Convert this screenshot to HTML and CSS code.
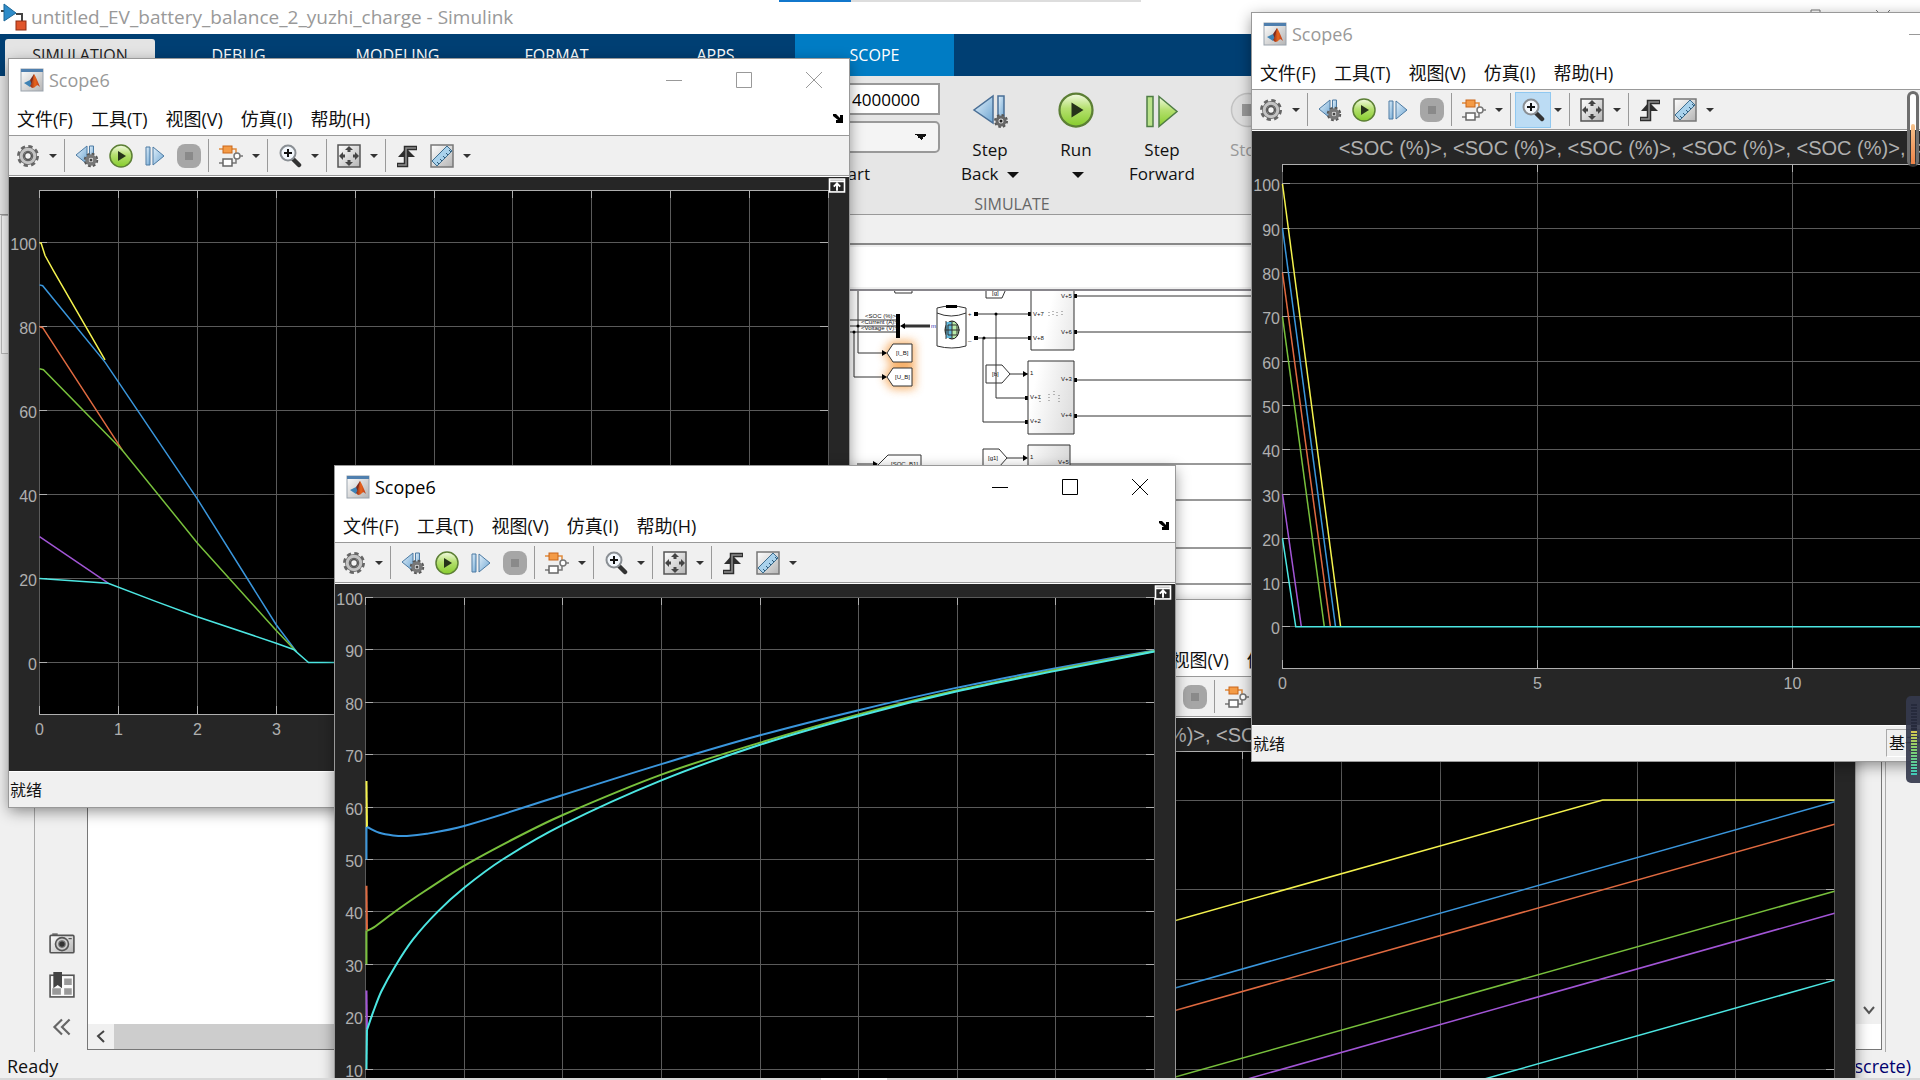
FILE: index.html
```
<!DOCTYPE html>
<html lang="zh-CN">
<head>
    <meta charset="UTF-8">
    <meta name="viewport" content="width=device-width, initial-scale=1.0">
    <title>untitled_EV_battery_balance_2_yuzhi_charge - Simulink</title>
    <link rel="stylesheet" href="styles.css">
</head>
<body>
    <!-- Shared icons -->
    <svg class="sprite" aria-hidden="true">
        <defs>
            <linearGradient id="gBlue" x1="0" y1="0" x2="1" y2="1"><stop offset="0" stop-color="#e3f1fb"/><stop offset="1" stop-color="#6fa6d2"/></linearGradient>
            <linearGradient id="gGreen" x1="0" y1="0" x2="0" y2="1"><stop offset="0" stop-color="#f4fbe4"/><stop offset="0.45" stop-color="#b5e070"/><stop offset="1" stop-color="#86cc2c"/></linearGradient>
            <linearGradient id="gGrey" x1="0" y1="0" x2="1" y2="1"><stop offset="0" stop-color="#ffffff"/><stop offset="1" stop-color="#b4b4b4"/></linearGradient>
            <linearGradient id="gBlock" x1="0" y1="0" x2="1" y2="1"><stop offset="0.3" stop-color="#ffffff"/><stop offset="1" stop-color="#cfcfcf"/></linearGradient>
            <linearGradient id="gFlame" x1="0" y1="0" x2="1" y2="0"><stop offset="0" stop-color="#8a2a1a"/><stop offset="0.5" stop-color="#e8641c"/><stop offset="1" stop-color="#b5371a"/></linearGradient>
        </defs>
        <symbol id="matlab" viewBox="0 0 24 24">
            <rect x="1" y="1" width="22" height="22" fill="url(#gGrey)" stroke="#9aa3ad"/>
            <rect x="1" y="1" width="22" height="3" fill="#4f7fae"/>
            <path d="M4 15l6-3 3 3-3 4z" fill="#3f83b5"/>
            <path d="M10 12l4-6 1 6-3 5z" fill="#7a2b20"/>
            <path d="M14 6c2 3 4 8 6 13-2-2-3-2-4-1-1 1-2 2-4 2l-2-2c2-2 3-8 4-12z" fill="url(#gFlame)"/>
        </symbol>
        <symbol id="gear" viewBox="0 0 24 24">
            <circle cx="12" cy="12" r="9" fill="none" stroke="#666" stroke-width="4" stroke-dasharray="4 3.07"/>
            <circle cx="12" cy="12" r="6.5" fill="#e6e6e6" stroke="#666" stroke-width="5"/>
            <circle cx="12" cy="12" r="6.8" fill="none" stroke="#c4c4c4" stroke-width="3"/>
            <circle cx="12" cy="12" r="3.4" fill="#f4f4f4" stroke="#555" stroke-width="1.5"/>
        </symbol>
        <symbol id="step-back" viewBox="0 0 24 24">
            <path d="M12 2v18L1 11z" fill="url(#gBlue)" stroke="#4d7ba3"/>
            <path d="M14.500 2h4v16h-4z" fill="url(#gBlue)" stroke="#4d7ba3"/>
            <circle cx="16" cy="16" r="6" fill="none" stroke="#555" stroke-width="2.500" stroke-dasharray="2.7 2"/>
            <circle cx="16" cy="16" r="4" fill="#f0f0f0" stroke="#777" stroke-width="3.500"/>
            <circle cx="16" cy="16" r="1.500" fill="#444"/>
        </symbol>
        <symbol id="step-back-large" viewBox="0 0 36 36">
            <path d="M21 4v27L2 18z" fill="url(#gBlue)" stroke="#4a6f96" stroke-width="1.500"/>
            <path d="M26 4h6v24h-6z" fill="url(#gBlue)" stroke="#4a6f96" stroke-width="1.500"/>
            <circle cx="29" cy="29" r="5.500" fill="none" stroke="#555" stroke-width="3" stroke-dasharray="2.3 2"/>
            <circle cx="29" cy="29" r="4" fill="#ddd" stroke="#666" stroke-width="3"/>
            <circle cx="29" cy="29" r="1.500" fill="#222"/>
        </symbol>
        <symbol id="run" viewBox="0 0 24 24">
            <circle cx="12" cy="12" r="11" fill="url(#gGreen)" stroke="#5c7f35" stroke-width="1.500"/>
            <path d="M9 7l8 5-8 5z" fill="#26331a"/>
        </symbol>
        <symbol id="step-fwd" viewBox="0 0 24 24">
            <path d="M3 3h4v18H3z" fill="url(#gBlue)" stroke="#4d7ba3"/>
            <path d="M10 3v18l11-9z" fill="url(#gBlue)" stroke="#4d7ba3"/>
        </symbol>
        <symbol id="step-fwd-green" viewBox="0 0 24 24">
            <path d="M2 3h4v20H2z" fill="#b9e28a" stroke="#4f7d45"/>
            <path d="M10 3v20l12-10z" fill="url(#gGreen)" stroke="#4f7d45"/>
        </symbol>
        <symbol id="stop" viewBox="0 0 24 24">
            <rect x="0" y="0" width="24" height="24" rx="8" fill="#a6a6a6"/>
            <rect x="8" y="8" width="8" height="8" fill="#8a8a8a"/>
        </symbol>
        <symbol id="stop-light" viewBox="0 0 24 24">
            <circle cx="12" cy="12" r="11" fill="#dedede" stroke="#c2c2c2"/>
            <rect x="8" y="8" width="8" height="8" fill="#999"/>
        </symbol>
        <symbol id="blocks" viewBox="0 0 24 24">
            <path d="M0 19h17v-5M20 12h4" fill="none" stroke="#777" stroke-width="1.500"/>
            <path d="M0 5h17v5" fill="none" stroke="#e08a3c" stroke-width="1.500"/>
            <rect x="4" y="2" width="9" height="7" fill="#f49b46" stroke="#c9661b"/>
            <rect x="4" y="15" width="9" height="7" fill="#fff" stroke="#666" stroke-width="1.500"/>
            <circle cx="18" cy="12" r="3" fill="#fff" stroke="#777" stroke-width="1.500"/>
        </symbol>
        <symbol id="zoom" viewBox="0 0 24 24">
            <path d="M15 15l6 6" stroke="#333" stroke-width="4.500" stroke-linecap="round"/>
            <circle cx="10" cy="9" r="7.500" fill="#f2f7fc" stroke="#8a8f94" stroke-width="2"/>
            <path d="M10 5v8M6 9h8" stroke="#111" stroke-width="2"/>
        </symbol>
        <symbol id="fit" viewBox="0 0 24 24">
            <rect x="1" y="1" width="22" height="22" fill="url(#gGrey)" stroke="#555" stroke-width="1.500"/>
            <path d="M12 2l4 4h-2.500v2h-3V6H8zM12 22l4-4h-2.500v-2h-3v2H8zM2 12l4-4v2.500h2v3H6V16zM22 12l-4-4v2.500h-2v3h2V16z" fill="#444"/>
        </symbol>
        <symbol id="trigger" viewBox="0 0 24 24">
            <path d="M1 21h9V4h11" fill="none" stroke="#2e2e2e" stroke-width="4.500"/>
            <path d="M10 4L2 13h17z" fill="#2e2e2e"/>
            <path d="M2 21h8V4h10" fill="none" stroke="#8d8d8d" stroke-width="1.500"/>
        </symbol>
        <symbol id="ruler" viewBox="0 0 24 24">
            <rect x="1" y="1" width="22" height="22" fill="url(#gGrey)" stroke="#777" stroke-width="1.500"/>
            <path d="M2 17L17 2l5 5L7 22z" fill="#a9d2ec" stroke="#3f6e8e"/>
            <path d="M9 20l-2-2M12 17l-2-2M15 14l-2-2M18 11l-2-2M21 8l-2-2" stroke="#2f5a78"/>
        </symbol>
        <symbol id="dock" viewBox="0 0 16 14">
            <rect x="1" y="1" width="14" height="12" fill="#262626" stroke="#fff" stroke-width="1.500"/>
            <path d="M1 3h14M8 12V6M5 8l3-3 3 3" fill="none" stroke="#fff" stroke-width="1.800"/>
        </symbol>
        <symbol id="camera" viewBox="0 0 24 24">
            <rect x="3" y="3" width="5" height="3" fill="#777"/>
            <rect x="1" y="5" width="22" height="16" rx="1" fill="url(#gGrey)" stroke="#555" stroke-width="1.500"/>
            <circle cx="12" cy="13" r="6" fill="#ccc" stroke="#555" stroke-width="1.500"/>
            <circle cx="12" cy="13" r="3" fill="#333" stroke="#777"/>
            <path d="M18 8h3" stroke="#444"/>
        </symbol>
        <symbol id="viewmarks" viewBox="0 0 24 24">
            <rect x="1" y="3" width="22" height="20" fill="#fafafa" stroke="#555" stroke-width="1.500"/>
            <path d="M14 6h7v6h-7zM14 15h7v6h-7zM3 15h8v6H3z" fill="#9a9a9a"/>
            <path d="M4 0h8v15l-4-3-4 3z" fill="#444"/>
        </symbol>
        <symbol id="simulink" viewBox="0 0 28 28">
            <path d="M1 8h3M16 11h6v8" fill="none" stroke="#444" stroke-width="2"/>
            <path d="M4 1l12 9-12 8z" fill="#2f8cc9" stroke="#1d6797"/>
            <rect x="16" y="18" width="10" height="9" fill="#e0552b" stroke="#8f2d12"/>
        </symbol>
    </svg>

    <div class="desktop">
        <!-- Main Simulink window -->
        <main class="simulink">
            <header class="main-title">
                <svg class="app-icon"><use href="#simulink"/></svg>
                <h1>untitled_EV_battery_balance_2_yuzhi_charge - Simulink</h1>
                <svg class="main-controls" width="100" height="26" fill="none" stroke="#777"><path d="M8 12.500h9v9H8zM11 12v-6h9v12h-3M76 6l14 14M90 6L76 20"/></svg>
            </header>

            <nav class="tabs">
                <button class="tab active">SIMULATION</button>
                <button class="tab">DEBUG</button>
                <button class="tab">MODELING</button>
                <button class="tab">FORMAT</button>
                <button class="tab">APPS</button>
                <button class="tab context">SCOPE</button>
            </nav>

            <section class="toolstrip">
                <div class="simulate">
                    <div class="simulate-row">
                        <div class="stop-time">
                            <input type="text" value="4000000" aria-label="Stop Time">
                            <select aria-label="Simulation mode"><option></option></select>
                            <button class="fast-restart">Fast Restart</button>
                        </div>
                        <button class="tool"><svg><use href="#step-back-large"/></svg><span>Step</span><span>Back <i class="caret"></i></span></button>
                        <button class="tool"><svg><use href="#run"/></svg><span>Run</span><span><i class="caret"></i></span></button>
                        <button class="tool"><svg><use href="#step-fwd-green"/></svg><span>Step</span><span>Forward</span></button>
                        <button class="tool" disabled><svg><use href="#stop-light"/></svg><span>Stop</span></button>
                    </div>
                    <p class="section-name">SIMULATE</p>
                </div>
            </section>

            <div class="workspace">
                <aside class="browser"><div class="browser-tab"></div></aside>
                <div class="editor">
                    <div class="doc-tabs"></div>
                    <div class="address"></div>
                    <div class="editor-row">
                        <div class="palette">
                            <button aria-label="Screenshot"><svg><use href="#camera"/></svg></button>
                            <button aria-label="Viewmarks"><svg><use href="#viewmarks"/></svg></button>
                            <button aria-label="Collapse"><svg viewBox="0 0 24 24" fill="none" stroke="#666" stroke-width="2"><path d="M12 5l-7 7 7 7M19 5l-7 7 7 7"/></svg></button>
                        </div>
                        <div class="canvas">
                            <svg class="model">
                                <g transform="translate(-88 -291)">
                                    <!-- Goto and From tags -->
                                    <path class="glow" d="M893 344h19v18h-19l-6-9zM893 368h19v18h-19l-6-9z"/>
                                    <path class="tag" d="M893 344h19v18h-19l-6-9zM893 368h19v18h-19l-6-9zM986 365h16l8 9-8 9h-16zM983 449h16l8 9-8 9h-16zM986 280h24l-8 18h-16zM892 280h20v13h-17zM888 455h33v20h-33l-10-10z"/>
                                    <!-- Wires -->
                                    <path class="wire" d="M840 320h56M840 326h56M840 332h56M858 290v63h28M854 332v45h28M976 314h54M976 338h54M996 314v84h32M983 338v84h45M1010 290h20M1010 374h18M1007 458h18M857 464h20"/>
                                    <path class="wire" d="M1074 296h781M1074 332h781M1074 380h781M1074 416h781M1070 464h785M1070 500h785M1070 548h785M1070 584h785"/>
                                    <path class="thick" d="M903 326h27"/>
                                    <rect x="896" y="314" width="4" height="24"/>
                                    <path d="M882 350l5 3-5 3zM882 374l5 3-5 3zM1023 371l5 3-5 3zM1023 455l5 3-5 3zM873 461l5 3-5 3zM900 326l5-3v6z"/>
                                    <path d="M974 312h4v4h-4zM974 336h4v4h-4zM1028 312h3v4h-3zM1028 336h3v4h-3zM1025 396h3v4h-3zM1025 420h3v4h-3zM1074 294h3v4h-3zM1074 330h3v4h-3zM1074 378h3v4h-3zM1074 414h3v4h-3z"/>
                                    <circle cx="996" cy="314" r="1.500"/><circle cx="984" cy="338" r="1.500"/><circle cx="858" cy="326" r="1.500"/><circle cx="854" cy="332" r="1.500"/>
                                    <!-- Subsystems -->
                                    <path class="block" d="M1031 280h43v70h-43zM1028 361h46v73h-46zM1028 445h42v60h-42z"/>
                                    <!-- Battery -->
                                    <path class="tag" d="M937 308q14-4 29 0v38q-14 4-29 0zM937 313q14 6 29 0"/>
                                    <rect x="946" y="305" width="11" height="3"/>
                                    <ellipse cx="952" cy="330" rx="7" ry="9" fill="#b9ecaa" stroke="#111"/>
                                    <path d="M946 322h6v16h-6z" fill="#62b9dc"/>
                                    <path class="wire" d="M946 321v18M952 321v18M945 330h15M948 325h9v10h-9z"/>
                                    <text class="tiny" x="865" y="318">&lt;SOC (%)&gt;</text>
                                    <text class="tiny" x="861" y="324">&lt;Current (A)&gt;</text>
                                    <text class="tiny" x="861" y="330">&lt;Voltage (V)&gt;</text>
                                    <text class="tiny" x="896" y="355">[I_B]</text>
                                    <text class="tiny" x="895" y="379">[U_B]</text>
                                    <text class="tiny" x="891" y="466">[SOC_B1]</text>
                                    <text class="tiny" x="992" y="376">[b]</text>
                                    <text class="tiny" x="992" y="295">[g]</text>
                                    <text class="tiny" x="988" y="460">[g1]</text>
                                    <text class="tiny port" x="931" y="328">m</text>
                                    <text class="tiny" x="968" y="316">+</text>
                                    <text class="tiny" x="968" y="341">_</text>
                                    <text class="tiny" x="1033" y="316">V+7</text>
                                    <text class="tiny" x="1033" y="340">V+8</text>
                                    <text class="tiny" x="1061" y="298">V+5</text>
                                    <text class="tiny" x="1061" y="334">V+6</text>
                                    <text class="tiny" x="1030" y="375">1</text>
                                    <text class="tiny" x="1030" y="399">V+1</text>
                                    <text class="tiny" x="1030" y="423">V+2</text>
                                    <text class="tiny" x="1061" y="381">V+3</text>
                                    <text class="tiny" x="1061" y="417">V+4</text>
                                    <text class="tiny" x="1030" y="459">1</text>
                                    <text class="tiny" x="1058" y="464">V+5</text>
                                    <path class="dots" d="M1049 312v6M1053 311v6M1057 312v6M1062 311v6M1040 395v8M1049 394v9M1054 391v6M1059 395v8"/>
                                </g>
                            </svg>
                            <div class="vscroll"><svg width="16" height="12" fill="none" stroke="#555" stroke-width="2"><path d="M3 2l5 6 5-6"/></svg></div>
                            <div class="hscroll"><svg width="26" height="24" fill="none" stroke="#444" stroke-width="2"><path d="M16 7l-6 5 6 6"/></svg><div class="thumb"></div></div>
                        </div>
                        <div class="right-dock"></div>
                    </div>
                </div>
            </div>

            <footer class="main-status">
                <span>Ready</span>
                <a href="#solver">auto(FixedStepDiscrete)</a>
            </footer>
        </main>

        <!-- Scope windows, back to front -->
        <article class="scope scope-charge" data-plot="charge"></article>
        <article class="scope scope-balance" data-plot="balance"></article>
        <article class="scope scope-discharge" data-plot="discharge"></article>
        <article class="scope scope-front" data-plot="front"></article>

        <div class="edge-top"></div>
        <div class="edge-pill"><div></div></div>
        <div class="edge-meter"><div></div></div>
        <div class="taskbar"><div></div></div>
    </div>

    <template id="scopeTemplate">
        <header class="scope-title">
            <svg><use href="#matlab"/></svg>
            <h2>Scope6</h2>
            <button aria-label="Minimize"><svg viewBox="0 0 16 16"><path d="M0 8.500h16"/></svg></button>
            <button aria-label="Maximize"><svg viewBox="0 0 16 16"><path d="M.5.5h15v15H.5z"/></svg></button>
            <button aria-label="Close"><svg viewBox="0 0 16 16"><path d="M0 0l16 16M16 0L0 16"/></svg></button>
        </header>
        <nav class="scope-menu">
            <button>文件(F)</button>
            <button>工具(T)</button>
            <button>视图(V)</button>
            <button>仿真(I)</button>
            <button>帮助(H)</button>
            <svg viewBox="0 0 12 12"><path d="M1 2h3l4 4V3h3v8H4V8h2L1 4z"/></svg>
        </nav>
        <div class="scope-tools">
            <button aria-label="Settings"><svg><use href="#gear"/></svg></button><i class="caret"></i>
            <hr>
            <button aria-label="Step back"><svg><use href="#step-back"/></svg></button>
            <button aria-label="Run"><svg><use href="#run"/></svg></button>
            <button aria-label="Step forward"><svg><use href="#step-fwd"/></svg></button>
            <button aria-label="Stop"><svg><use href="#stop"/></svg></button>
            <hr>
            <button aria-label="Highlight block"><svg><use href="#blocks"/></svg></button><i class="caret"></i>
            <hr>
            <button aria-label="Zoom" class="zoom"><svg><use href="#zoom"/></svg></button><i class="caret"></i>
            <hr>
            <button aria-label="Scale axes"><svg><use href="#fit"/></svg></button><i class="caret"></i>
            <hr>
            <button aria-label="Triggers"><svg><use href="#trigger"/></svg></button>
            <button aria-label="Measurements"><svg><use href="#ruler"/></svg></button><i class="caret"></i>
        </div>
        <div class="scope-body">
            <svg class="plot"></svg>
            <svg class="dock-icon"><use href="#dock"/></svg>
        </div>
        <footer class="scope-status">
            <span>就绪</span>
            <span class="sample">基于采样</span>
        </footer>
    </template>

    <script>
        const COLORS = {
            yellow: "#f4f24e", blue: "#3a96dc", orange: "#e06a40",
            green: "#78c03c", purple: "#a255d6", cyan: "#4ce6e2"
        };
        const SOC_TITLE = Array(6).fill("<SOC (%)>").join(", ");

        const PLOTS = {
            balance: {
                x: [0, 10], y: [-12.4, 112.5], xStep: 1, xLabels: true, yTicks: [0, 20, 40, 60, 80, 100],
                series: [
                    ["yellow", [[0, 100], [0.02, 100], [0.07, 97], [0.18, 93.3], [0.83, 72.1]]],
                    ["blue", [[0, 90], [0.04, 89.8], [0.83, 71.6], [2, 39], [3, 9], [3.26, 2.5]]],
                    ["orange", [[0, 80], [0.04, 79.8], [1.05, 50.6]]],
                    ["green", [[0, 70], [0.05, 69.8], [1.05, 50.6], [2, 28.5], [3, 7.6], [3.26, 2.5]]],
                    ["purple", [[0, 30], [0.87, 18.9]]],
                    ["cyan", [[0, 20], [0.87, 18.9], [1.48, 14.5], [2, 10.9], [3, 4.6], [3.22, 3.1], [3.41, 0], [10, 0]]]
                ]
            },
            front: {
                x: [0, 8], y: [0, 100], xStep: 1, yTicks: [10, 20, 30, 40, 50, 60, 70, 80, 90, 100], smooth: true,
                series: [
                    ["yellow", [[0.01, 65], [0.015, 56.2]]],
                    ["blue", [[0.01, 50], [0.01, 56.2]]],
                    ["orange", [[0.01, 45], [0.015, 36.4]]],
                    ["green", [[0.01, 30], [0.01, 36.4]]],
                    ["purple", [[0.01, 25], [0.015, 17.5]]],
                    ["blue", [[0.015, 56.2], [0.14, 55.1], [0.28, 54.6], [0.42, 54.5], [0.62, 54.9], [1, 56.4], [2, 62.3], [3, 68.2], [4, 73.7], [5, 78.5], [6, 82.8], [7, 86.5], [8, 89.9]]],
                    ["green", [[0.015, 36.4], [0.08, 37], [0.28, 39.8], [0.5, 42.7], [1, 48.8], [1.53, 54.2], [2, 58.5], [3, 66.2], [4, 72.3], [5, 77.7], [6, 82.3], [7, 86.2], [8, 89.8]]],
                    ["cyan", [[0.01, 10], [0.015, 17.5]]],
                    ["cyan", [[0.015, 17.5], [0.08, 21], [0.16, 24.8], [0.3, 29.6], [0.48, 34.7], [0.73, 40], [1, 44.6], [1.39, 50], [2, 56.6], [3, 65.1], [4, 71.9], [5, 77.4], [6, 82.1], [7, 86], [8, 89.7]]]
                ]
            },
            discharge: {
                x: [0, 15.47], y: [-9.4, 104.4], xStep: 5, xLabels: true, yTicks: [0, 10, 20, 30, 40, 50, 60, 70, 80, 90, 100], title: SOC_TITLE,
                series: [
                    ["yellow", [[0, 100], [1.14, 0]]],
                    ["blue", [[0, 90], [1.04, 0]]],
                    ["orange", [[0, 80], [0.94, 0]]],
                    ["green", [[0, 70], [0.82, 0]]],
                    ["purple", [[0, 30], [0.37, 0]]],
                    ["cyan", [[0, 20], [0.26, 0], [15.47, 0]]]
                ]
            },
            charge: {
                x: [0, 8], y: [-1.4, 110.8], xStep: 1, yTicks: [40, 60, 80, 100], title: SOC_TITLE,
                series: [
                    ["yellow", [[0, 65], [5.65, 100], [8, 100]]],
                    ["blue", [[0, 50], [8, 99.6]]],
                    ["orange", [[0, 45], [8, 94.6]]],
                    ["green", [[0, 30.2], [8, 79.7]]],
                    ["purple", [[0, 25.2], [8, 74.8]]],
                    ["cyan", [[0, 10.3], [8, 59.9]]]
                ]
            }
        };

        function node(svg, name, attrs, text) {
            const el = document.createElementNS("http://www.w3.org/2000/svg", name);
            for (const key in attrs) el.setAttribute(key, attrs[key]);
            if (text !== undefined) el.textContent = text;
            svg.appendChild(el);
        }

        // Catmull-Rom through the samples when smooth is set
        function linePath(pts, smooth) {
            let d = `M${pts[0]}`;
            for (let i = 1; i < pts.length; i++) {
                if (!smooth || pts.length < 3) {
                    d += `L${pts[i]}`;
                    continue;
                }
                const a = pts[i - 2] || pts[i - 1], b = pts[i - 1], c = pts[i], e = pts[i + 1] || c;
                const t = (c[0] - b[0]) / 3;
                const m1 = (c[1] - a[1]) / (c[0] - a[0]), m2 = (e[1] - b[1]) / (e[0] - b[0]);
                d += `C${b[0] + t},${b[1] + m1 * t} ${c[0] - t},${c[1] - m2 * t} ${c}`;
            }
            return d;
        }

        function drawPlot(svg, plot) {
            const left = 30, right = 819, bottom = 537;
            const top = plot.title ? 33 : 13;
            const px = v => left + (v - plot.x[0]) / (plot.x[1] - plot.x[0]) * (right - left);
            const py = v => bottom - (v - plot.y[0]) / (plot.y[1] - plot.y[0]) * (bottom - top);

            node(svg, "rect", { class: "area", x: left + 0.5, y: top + 0.5, width: right - left, height: bottom - top });
            for (let v = plot.x[0]; v <= plot.x[1]; v += plot.xStep) {
                const x = Math.round(px(v)) + 0.5;
                node(svg, "path", { class: "grid", d: `M${x} ${top + 1}V${bottom}` });
                node(svg, "path", { class: "tick", d: `M${x} ${top}v8M${x} ${bottom}v-8` });
                if (plot.xLabels) {
                    node(svg, "text", { class: "label", x: x, y: bottom + 21, "text-anchor": "middle" }, v);
                }
            }
            for (const v of plot.yTicks) {
                const y = Math.round(py(v)) + 0.5;
                node(svg, "path", { class: "grid", d: `M${left + 1} ${y}H${right}` });
                node(svg, "path", { class: "tick", d: `M${left} ${y}h8M${right} ${y}h-8` });
                node(svg, "text", { class: "label", x: left - 2, y: y + 7, "text-anchor": "end" }, v);
            }
            if (plot.title) {
                node(svg, "text", { class: "heading", x: (left + right) / 2, y: 24, "text-anchor": "middle" }, plot.title);
            }
            for (const [color, data] of plot.series) {
                const pts = data.map(([x, y]) => [px(x) + 0.5, py(y) + 0.5]);
                node(svg, "path", { class: "series", stroke: COLORS[color], d: linePath(pts, plot.smooth) });
            }
        }

        document.querySelectorAll(".scope").forEach(scope => {
            scope.appendChild(document.getElementById("scopeTemplate").content.cloneNode(true));
            drawPlot(scope.querySelector(".plot"), PLOTS[scope.dataset.plot]);
        });
    </script>
</body>
</html>
```
FILE: styles.css
```
/* Global Styles */
* {
    margin: 0;
    padding: 0;
    box-sizing: border-box;
}

body {
    font-family: "Open Sans", "Noto Sans CJK SC", sans-serif;
    font-size: 18px;
    color: #111;
    background: #f0f0f0;
    overflow: hidden;
}

button {
    font: inherit;
    color: inherit;
    background: none;
    border: none;
}

.sprite {
    position: absolute;
    width: 0;
    height: 0;
}

.desktop {
    position: relative;
    height: 100vh;
    overflow: hidden;
}

.caret {
    display: inline-block;
    border: 6px solid transparent;
    border-top-color: #111;
    border-bottom: none;
}

/* Main Window */
.simulink {
    display: flex;
    flex-direction: column;
    height: 100%;
    background: #f0f0f0;
}

.main-title {
    display: flex;
    align-items: center;
    height: 34px;
    background: #fff;
    padding-right: 20px;
}

.app-icon {
    width: 28px;
    height: 28px;
    margin-right: 3px;
}

.main-title h1 {
    flex: 1;
    font-size: 19px;
    font-weight: 400;
    color: #999;
}

.tabs {
    display: flex;
    height: 42px;
    background: #003f73;
}

.tab {
    width: 159px;
    font-size: 16px;
    color: #fff;
}

.tab.active {
    width: 150px;
    margin: 5px 4px 0 5px;
    padding-bottom: 5px;
    background: #e4e4e4;
    color: #222;
    border-radius: 3px 3px 0 0;
}

.tab.context {
    background: #007cc4;
}

.toolstrip {
    height: 139px;
    background: #e6e6e6;
    border-bottom: 1px solid #999;
    padding-left: 722px;
    font-size: 17px;
}

.simulate {
    width: 580px;
}

.simulate-row {
    display: flex;
    height: 118px;
}

.stop-time {
    display: flex;
    flex-direction: column;
    align-items: stretch;
    gap: 6px;
    width: 218px;
    margin-right: 7px;
    padding-top: 7px;
}

.stop-time input {
    height: 32px;
    font: inherit;
    border: 2px solid #999;
    background: #fff;
    padding-left: 128px;
}

.stop-time select {
    height: 32px;
    appearance: none;
    border: 2px solid #999;
    border-radius: 5px;
    background-color: #f4f4f4;
    background-image: linear-gradient(to bottom right, #111 50%, transparent 50%), linear-gradient(to bottom left, #111 50%, transparent 50%);
    background-size: 6px 6px;
    background-position: right 11px center, right 17px center;
    background-repeat: no-repeat;
}

.fast-restart {
    text-align: right;
    padding-right: 70px;
    line-height: 30px;
}

.tool {
    display: flex;
    flex-direction: column;
    align-items: center;
    width: 86px;
    padding-top: 16px;
    line-height: 24px;
}

.tool svg {
    width: 36px;
    height: 36px;
    margin-bottom: 10px;
}

.tool .caret {
    margin-left: 4px;
    vertical-align: 2px;
}

.tool:disabled {
    color: #999;
}

.section-name {
    font-size: 16px;
    line-height: 20px;
    text-align: center;
    color: #666;
}

/* Workspace */
.workspace {
    display: flex;
    flex: 1;
}

.browser {
    width: 35px;
    border-right: 1px solid #aaa;
}

.browser-tab {
    height: 139px;
    margin-left: 1px;
    border: 1px solid #bbb;
    background: #f8f8f8;
}

.editor {
    display: flex;
    flex: 1;
    flex-direction: column;
}

.doc-tabs {
    height: 30px;
    border-bottom: 2px solid #888;
}

.address {
    height: 46px;
    border-top: 2px solid #f0f0f0;
    border-bottom: 2px solid #88868c;
    background: #fff;
    box-shadow: inset 0 -2px #f0f0f0;
}

.editor-row {
    display: flex;
    flex: 1;
}

.palette {
    display: flex;
    flex-direction: column;
    justify-content: flex-end;
    align-items: center;
    gap: 16px;
    width: 52px;
    padding: 0 0 12px 2px;
}

.palette button,
.palette svg {
    display: block;
    width: 26px;
    height: 26px;
}

.canvas {
    display: grid;
    grid-template: 1fr 25px / 1fr 25px;
    flex: 1;
    border: 1px solid #777;
    border-top: none;
    background: #fff;
    margin-bottom: 2px;
}

.model {
    width: 100%;
    height: 100%;
}

.wire {
    fill: none;
    stroke: #333;
}

.thick {
    stroke: #333;
    stroke-width: 3px;
}

.tag {
    fill: #fff;
    stroke: #333;
}

.block {
    fill: url(#gBlock);
    stroke: #333;
}

.glow {
    fill: #f5a04a;
    stroke: #f5a04a;
    stroke-width: 6px;
    opacity: 0.8;
    filter: blur(5px);
}

.dots {
    stroke: #777;
    stroke-dasharray: 1 2;
}

.tiny {
    font-family: "Liberation Sans", sans-serif;
    font-size: 6px;
    fill: #111;
}

.port {
    fill: #2a2ab0;
}

.vscroll {
    display: flex;
    justify-content: center;
    align-items: flex-end;
    padding-bottom: 7px;
    background: #f0f0f0;
}

.hscroll {
    display: flex;
    background: #f0f0f0;
}

.thumb {
    flex: 1;
    background: #cdcdcd;
}

.right-dock {
    width: 35px;
    margin-left: 3px;
    border-left: 1px solid #aaa;
}

.main-status {
    display: flex;
    justify-content: space-between;
    align-items: center;
    height: 28px;
    padding: 0 9px 0 7px;
}

.main-status a {
    color: #00006e;
    text-decoration: none;
}

/* Scope Windows */
.scope {
    position: absolute;
    display: flex;
    flex-direction: column;
    width: 840px;
    height: 748px;
    background: #fff;
    box-shadow: 0 0 0 1px #999, 0 4px 14px rgba(0, 0, 0, 0.45);
    color: #111;
}

.scope-charge {
    left: 1015px;
    top: 600px;
}

.scope-balance {
    left: 9px;
    top: 59px;
}

.scope-discharge {
    left: 1252px;
    top: 13px;
}

.scope-front {
    left: 335px;
    top: 466px;
}

.scope-title {
    display: flex;
    align-items: center;
    height: 42px;
    padding-left: 11px;
    color: #999;
}

.scope-front .scope-title {
    color: #000;
}

.scope-title > svg {
    width: 24px;
    height: 24px;
}

.scope-title h2 {
    flex: 1;
    margin-left: 5px;
    font-size: 18px;
    font-weight: 400;
}

.scope-title button {
    display: flex;
    justify-content: center;
    align-items: center;
    width: 70px;
    height: 42px;
}

.scope-title button svg {
    width: 16px;
    height: 16px;
    fill: none;
    stroke: currentColor;
}

.scope-menu {
    display: flex;
    align-items: center;
    gap: 18px;
    height: 34px;
    padding: 0 5px 0 8px;
}

.scope-menu svg {
    width: 12px;
    height: 12px;
    margin-left: auto;
}

.scope-tools {
    display: flex;
    align-items: center;
    height: 41px;
    margin-bottom: 1px;
    padding-left: 2px;
    background: #f0f0f0;
    border-top: 1px solid #999;
    border-bottom: 1px solid #999;
}

.scope-tools button {
    display: flex;
    justify-content: center;
    align-items: center;
    width: 34px;
    height: 34px;
}

.scope-tools svg {
    width: 24px;
    height: 24px;
}

.scope-tools .caret {
    border-width: 4px;
    border-bottom: none;
    border-top-color: #333;
    margin: 0 5px 0 4px;
}

.scope-tools hr {
    width: 1px;
    height: 33px;
    margin: 0 5px 0 2px;
    border: none;
    background: #999;
}

.scope-discharge .zoom {
    background: #bcdcf4;
    outline: 1px solid #90c8f0;
}

.scope-body {
    position: relative;
    flex: 1;
    background: #262626;
}

.plot {
    display: block;
    width: 100%;
    height: 100%;
}

.dock-icon {
    position: absolute;
    top: 1px;
    right: 3px;
    width: 18px;
    height: 15px;
}

.area {
    fill: #000;
    stroke: #afafaf;
}

.grid {
    stroke: #5a5a5a;
}

.tick {
    stroke: #afafaf;
    fill: none;
}

.label,
.heading {
    font-family: "Liberation Sans", sans-serif;
    font-size: 16px;
    fill: #afafaf;
}

.heading {
    font-size: 20px;
}

.series {
    fill: none;
    stroke-width: 1.5px;
}

.scope-front .series {
    stroke-width: 2px;
}

.scope-status {
    display: flex;
    justify-content: space-between;
    align-items: center;
    height: 36px;
    padding: 0 4px 2px 1px;
    background: #f0f0f0;
    border-top: 1px solid #fff;
    font-size: 16px;
}

.sample {
    width: 202px;
    height: 28px;
    padding-left: 2px;
    border: 1px solid #aaa;
    border-right-color: #fff;
    border-bottom-color: #fff;
    line-height: 26px;
}

/* Screen Edge Overlays */
.edge-top {
    position: absolute;
    top: 0;
    left: 779px;
    width: 362px;
    height: 2px;
    background: linear-gradient(90deg, #1177cc 72px, #ddd 72px);
}

.edge-pill {
    position: absolute;
    top: 91px;
    right: 1px;
    width: 12px;
    height: 76px;
    padding: 30px 2px 0;
    border: 3px solid #6e6e6e;
    border-bottom-color: #333;
    border-radius: 6px;
    background: linear-gradient(#fff 36px, #333 36px);
}

.edge-pill div {
    height: 100%;
    margin: 0 -1px;
    border-radius: 2px 2px 0 0;
    background: linear-gradient(#f6c48e, #ee8347);
}

.edge-meter {
    position: absolute;
    top: 696px;
    right: -4px;
    width: 18px;
    height: 87px;
    padding: 8px 7px 8px 5px;
    border-radius: 5px;
    background: rgba(52, 56, 76, 0.92);
}

.edge-meter div {
    height: 100%;
    background: repeating-linear-gradient(transparent 0 2px, #34384c 2px 3px), linear-gradient(#262a3c 38%, #d6c850 38%, #7fcf70 65%, #3fc8b8);
}

.taskbar {
    position: absolute;
    bottom: 0;
    left: 0;
    width: 100%;
    height: 2px;
    background: #d8d8d8;
}

.taskbar div {
    width: 66px;
    height: 2px;
    margin-left: 821px;
    background: #fff;
}
```
